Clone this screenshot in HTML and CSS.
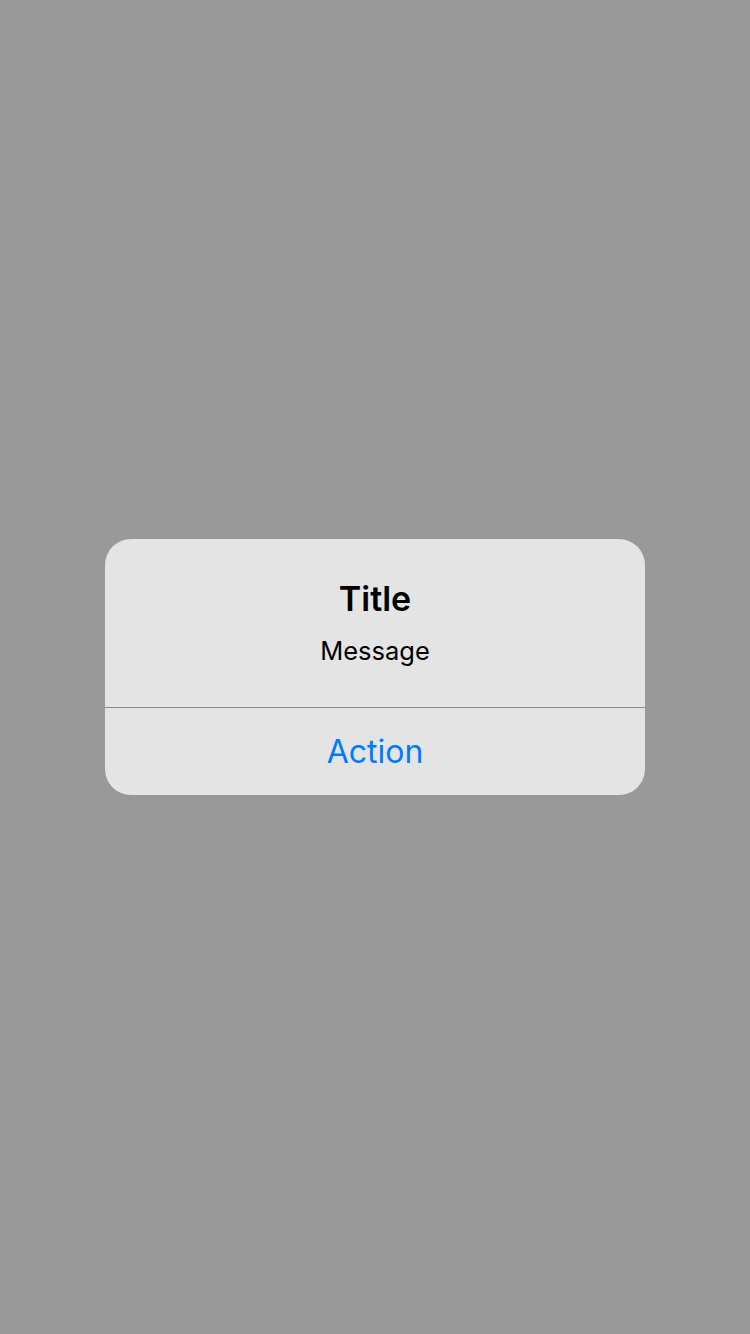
FILE: index.html
```html
<!DOCTYPE html>
<html>
<head>
<meta charset="utf-8">
<link rel="stylesheet" href="styles.css">
</head>
<body>
<div class="screen">
  <div class="alert">
    <div class="alert-body">
      <div class="alert-title">Title</div>
      <div class="alert-message">Message</div>
    </div>
    <div class="alert-actions">
      <div class="alert-action">Action</div>
    </div>
  </div>
</div>
</body>
</html>
```
FILE: styles.css
```css
html, body {
  margin: 0;
  padding: 0;
  width: 750px;
  height: 1334px;
  background: #999999;
  font-family: Inter, "Noto Sans", "Liberation Sans", sans-serif;
}
.screen {
  width: 750px;
  height: 1334px;
  display: flex;
  align-items: center;
  justify-content: center;
}
.alert {
  width: 540px;
  height: 256px;
  background: #e4e4e4;
  border-radius: 26px;
  overflow: hidden;
  display: flex;
  flex-direction: column;
}
.alert-body {
  height: 169px;
  box-sizing: border-box;
  padding-top: 40px;
  text-align: center;
  border-bottom: 1px solid #8c8c8c;
}
.alert-title {
  font-size: 34px;
  line-height: 40px;
  font-weight: 600;
  color: #000;
}
.alert-message {
  margin-top: 16px;
  font-size: 25.5px;
  line-height: 32px;
  color: #000;
}
.alert-actions {
  flex: 1;
  display: flex;
}
.alert-action {
  flex: 1;
  text-align: center;
  font-size: 32px;
  line-height: 87px;
  color: #007aff;
}
```
